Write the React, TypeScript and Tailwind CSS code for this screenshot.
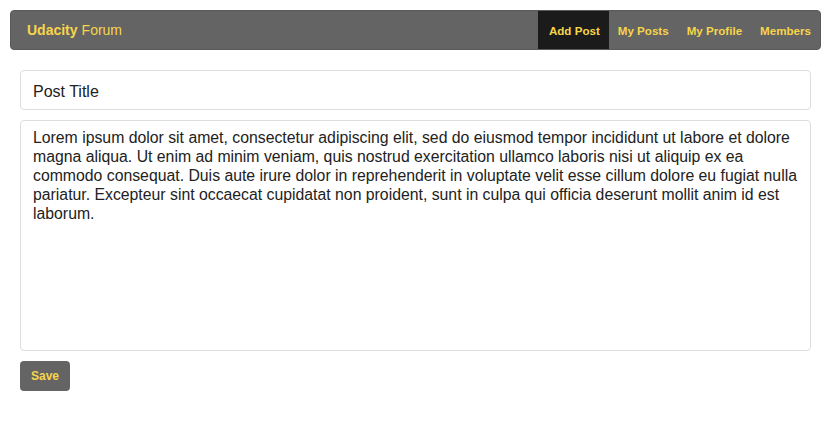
import { useState } from "react";

const lorem =
	"Lorem ipsum dolor sit amet, consectetur adipiscing elit, sed do eiusmod tempor incididunt ut labore et dolore magna aliqua. Ut enim ad minim veniam, quis nostrud exercitation ullamco laboris nisi ut aliquip ex ea commodo consequat. Duis aute irure dolor in reprehenderit in voluptate velit esse cillum dolore eu fugiat nulla pariatur. Excepteur sint occaecat cupidatat non proident, sunt in culpa qui officia deserunt mollit anim id est laborum.";

const links = ["Add Post", "My Posts", "My Profile", "Members"];

export default function App() {
	const [title, setTitle] = useState("Post Title");
	const [body, setBody] = useState(lorem);

	return (
		<div className="min-h-[421px] bg-white p-[10px] font-['Liberation_Sans',Arial,sans-serif]">
			{/* Navbar */}
			<nav className="flex h-10 items-stretch justify-between overflow-hidden rounded-[4px] border border-[#5a5a5a] bg-[#646464] text-[#f7d54a]">
				<div className="flex items-center pl-4 pt-[1px] text-[14px]">
					<span className="font-bold">Udacity</span>
					<span className="ml-1">Forum</span>
				</div>
				<ul className="flex items-stretch text-[11.6px] font-bold">
					{links.map((l, i) => (
						<li
							key={l}
							className={
								i === 0
									? "flex items-center bg-[#1b1b1b] pl-[11px] pr-[9px] pt-[1px]"
									: "flex items-center px-[9px] pt-[1px]"
							}
						>
							{l}
						</li>
					))}
				</ul>
			</nav>

			{/* Form */}
			<div className="flex flex-col gap-[10px] px-[10px] pt-5">
				<input
					value={title}
					onChange={(e) => setTitle(e.target.value)}
					className="h-10 w-full rounded-[4px] border border-[#dddddd] px-3 pt-[3px] text-[16px] text-[#222] outline-none"
				/>
				<textarea
					value={body}
					onChange={(e) => setBody(e.target.value)}
					className="h-[231px] w-full resize-none rounded-[4px] border border-[#dddddd] pl-3 pr-2 py-[7px] text-[15.8px] leading-[19px] text-[#222] outline-none"
				/>
				<div>
					<button className="h-[30px] w-[50px] rounded-[4px] bg-[#646464] text-[12px] font-bold text-[#f7d54a]">
						Save
					</button>
				</div>
			</div>
		</div>
	);
}
